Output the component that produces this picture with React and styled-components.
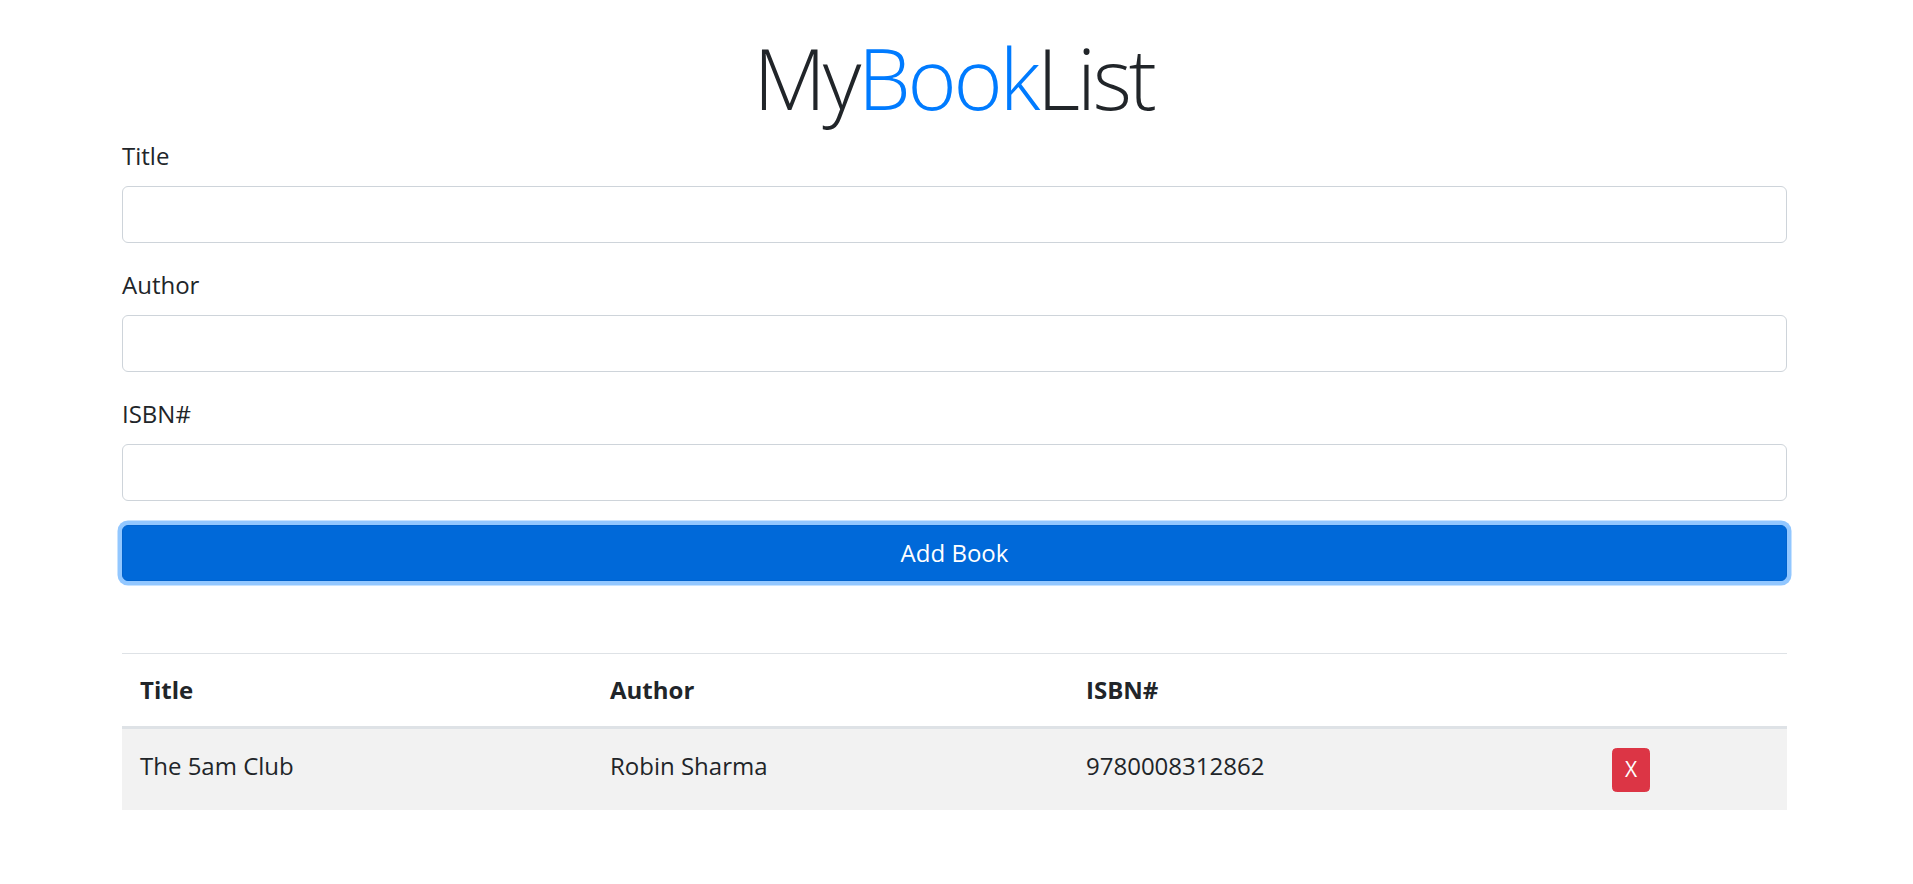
import styled, { createGlobalStyle } from "styled-components";
import { useState } from "react";

const GlobalStyle = createGlobalStyle`
  * {
    box-sizing: border-box;
  }
  body {
    margin: 0;
    background: #fff;
    color: #212529;
    font-family: "Open Sans", "Noto Sans", sans-serif;
    font-size: 24px;
    line-height: 1.5;
  }
`;

const Container = styled.div`
  max-width: 1669px;
  margin: 0 auto;
  padding: 28px 4px 0 0;
`;

const Heading = styled.h1`
  margin: 0 0 9px;
  padding-right: 2px;
  text-align: center;
  font-size: 84px;
  font-weight: 300;
  line-height: 1.2;
  letter-spacing: -3.2px;
`;

const Accent = styled.span`
  color: #007bff;
`;

const Form = styled.form`
  display: flex;
  flex-direction: column;
`;

const Group = styled.div`
  display: flex;
  flex-direction: column;
  margin-bottom: 24px;
`;

const Label = styled.label`
  margin-bottom: 12px;
  line-height: 36px;
`;

const Input = styled.input`
  height: 57px;
  padding: 9px 18px;
  font: inherit;
  color: #495057;
  border: 1.5px solid #ced4da;
  border-radius: 6px;
  outline: none;
`;

const SubmitButton = styled.button`
  height: 56px;
  border: 1.5px solid #0062cc;
  border-radius: 6px;
  background-color: #0069d9;
  color: #fff;
  font: inherit;
  cursor: pointer;
  box-shadow: 0 0 0 4.5px rgba(38, 143, 255, 0.5);
`;

const Table = styled.table`
  width: 100%;
  margin-top: 72px;
  border-collapse: collapse;
  table-layout: fixed;
`;

const Th = styled.th`
  width: ${(p) => p.$w}px;
  padding: 18px;
  text-align: left;
  font-weight: 700;
  vertical-align: bottom;
  border-top: 1.5px solid #dee2e6;
  border-bottom: 3px solid #dee2e6;
`;

const Row = styled.tr`
  background-color: ${(p) => (p.$odd ? "rgba(0, 0, 0, 0.05)" : "transparent")};
`;

const Td = styled.td`
  padding: 19px 18px 18px;
  vertical-align: top;
`;

const DeleteButton = styled.button`
  padding: 5.5px 12px;
  border: 1.5px solid #dc3545;
  border-radius: 4.5px;
  background-color: #dc3545;
  color: #fff;
  font: inherit;
  font-size: 21px;
  line-height: 1.5;
  cursor: pointer;
`;

const App = () => {
  const [books, setBooks] = useState([
    { title: "The 5am Club", author: "Robin Sharma", isbn: "9780008312862" },
  ]);
  const [title, setTitle] = useState("");
  const [author, setAuthor] = useState("");
  const [isbn, setIsbn] = useState("");

  const handleSubmit = (e) => {
    e.preventDefault();
    if (!title || !author || !isbn) return;
    setBooks([...books, { title, author, isbn }]);
    setTitle("");
    setAuthor("");
    setIsbn("");
  };

  const removeBook = (i) => setBooks(books.filter((_, idx) => idx !== i));

  return (
    <>
      <GlobalStyle />
      <Container>
        <Heading>
          My<Accent>Book</Accent>List
        </Heading>
        <Form onSubmit={handleSubmit}>
          <Group>
            <Label htmlFor="title">Title</Label>
            <Input id="title" value={title} onChange={(e) => setTitle(e.target.value)} />
          </Group>
          <Group>
            <Label htmlFor="author">Author</Label>
            <Input id="author" value={author} onChange={(e) => setAuthor(e.target.value)} />
          </Group>
          <Group>
            <Label htmlFor="isbn">ISBN#</Label>
            <Input id="isbn" value={isbn} onChange={(e) => setIsbn(e.target.value)} />
          </Group>
          <SubmitButton type="submit">Add Book</SubmitButton>
        </Form>
        <Table>
          <thead>
            <tr>
              <Th $w={470}>Title</Th>
              <Th $w={476}>Author</Th>
              <Th $w={526}>ISBN#</Th>
              <Th $w={193}></Th>
            </tr>
          </thead>
          <tbody>
            {books.map((b, i) => (
              <Row key={i} $odd={i % 2 === 0}>
                <Td>{b.title}</Td>
                <Td>{b.author}</Td>
                <Td>{b.isbn}</Td>
                <Td>
                  <DeleteButton onClick={() => removeBook(i)}>X</DeleteButton>
                </Td>
              </Row>
            ))}
          </tbody>
        </Table>
      </Container>
    </>
  );
};

export default App;
